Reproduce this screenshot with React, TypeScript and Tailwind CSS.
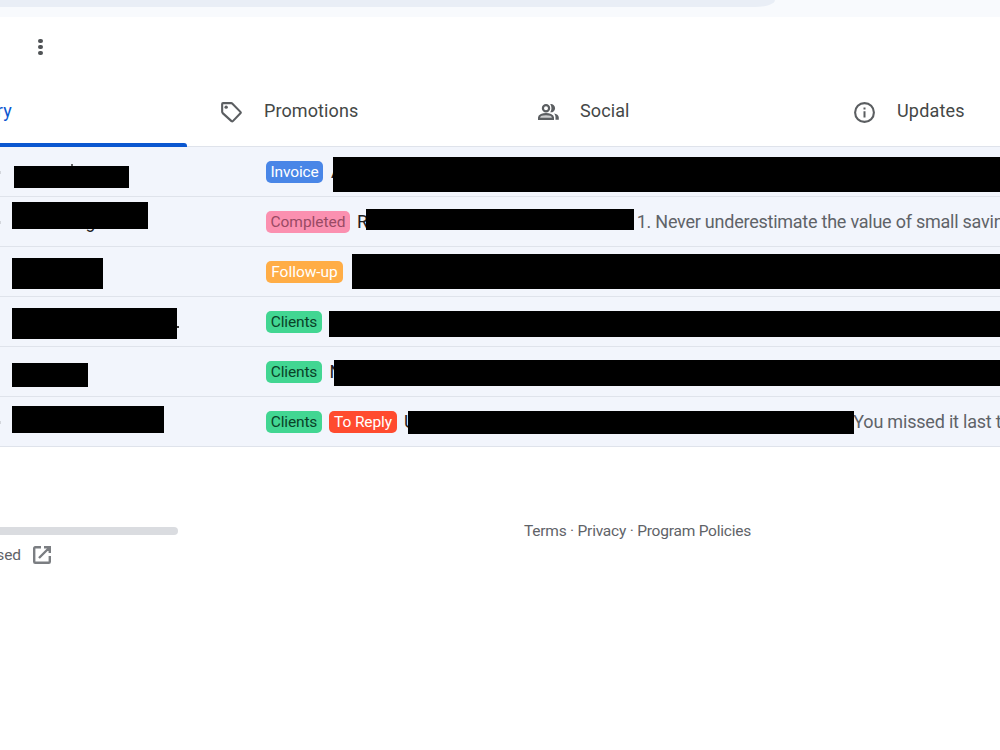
import type { ReactNode } from "react";
import clsx from "clsx";

type Label = { text: string; className: string };

type Mail = {
  id: string;
  star?: boolean;
  sender: ReactNode;
  labels: Label[];
  // first letter of the subject that stays visible next to the redaction
  initial?: string;
  initialClass: string;
  barClass: string;
  snippet?: string;
  snippetClass?: string;
};

const CLIENTS: Label = {
  text: "Clients",
  className: "w-14 bg-[#42d692] text-[#094228] tracking-[-0.15px]",
};

const MAILS: Mail[] = [
  {
    id: "invoice",
    star: true,
    sender: (
      <>
        <div className="ml-[1.5px] mt-[18.5px] h-[22.5px] w-[115px] bg-black" />
        <span className="absolute left-[71px] top-[17px] size-0.5 rounded-full bg-[#333]" />
      </>
    ),
    labels: [
      {
        text: "Invoice",
        className: "w-[57px] bg-[#4986e7] text-white tracking-[-0.15px]",
      },
    ],
    initial: "A",
    initialClass: "ml-[8px] w-[1.5px]",
    barClass: "mt-[10px] h-[34.5px] w-[668px]",
  },
  {
    id: "completed",
    star: true,
    sender: (
      <>
        <span className="absolute left-[85.5px] top-[13px] text-[17.5px] leading-6 text-[#202124]">
          g
        </span>
        <div className="relative mt-[5.400px] h-[26.5px] w-[136px] bg-black" />
      </>
    ),
    labels: [
      {
        text: "Completed",
        className: "w-[84px] bg-[#fb90b0] text-[#994a64] tracking-[-0.02px]",
      },
    ],
    initial: "R",
    initialClass: "ml-[7px] w-[9.3px]",
    barClass: "mt-[12px] h-[21.400px] w-[267.400px]",
    snippet: "1. Never underestimate the value of small savings",
    snippetClass: "ml-[3px] tracking-[-0.24px]",
  },
  {
    id: "follow-up",
    sender: <div className="mt-[10.5px] h-[31.5px] w-[91px] bg-black" />,
    labels: [
      {
        text: "Follow-up",
        className: "w-[77px] bg-[#ffad46] text-white tracking-[-0.02px]",
      },
    ],
    initialClass: "ml-[9px]",
    barClass: "mt-[7px] h-[35px] w-[648px]",
  },
  {
    id: "clients-1",
    sender: (
      <>
        <div className="mt-[11px] h-[31px] w-[165px] bg-black" />
        <span className="absolute left-[177px] top-[29px] h-0.5 w-[1.5px] bg-[#333]" />
      </>
    ),
    labels: [CLIENTS],
    initialClass: "ml-[7.3px]",
    barClass: "mt-[14px] h-[26px] w-[671px]",
  },
  {
    id: "clients-2",
    sender: <div className="mt-4 h-[24.400px] w-[76px] bg-black" />,
    labels: [CLIENTS],
    initial: "N",
    initialClass: "ml-[7.5px] w-[4.5px]",
    barClass: "mt-[12.5px] h-[26.5px] w-[666px]",
  },
  {
    id: "to-reply",
    star: true,
    sender: <div className="mt-[9.400px] h-[26.5px] w-[152.400px] bg-black" />,
    labels: [
      CLIENTS,
      {
        text: "To Reply",
        className:
          "ml-[7px] w-[68px] bg-[#ff4b2f] text-white tracking-[-0.1px]",
      },
    ],
    initial: "U",
    initialClass: "ml-[7px] w-[4.4px]",
    barClass: "mt-[14.400px] h-[23px] w-[445.400px]",
    snippet: "You missed it last time",
    snippetClass: "-ml-[0.5px] tracking-[-0.2px]",
  },
];

function TagIcon() {
  return (
    <svg viewBox="0 0 20 20" className="size-[21px]" fill="none" aria-hidden>
      <path
        d="M1.1 1.9a.8.8 0 0 1 .8-.8h7.8c.5 0 .9.2 1.2.5l7.6 7.8c.4.4.4.9 0 1.3l-7.2 7.5c-.4.4-.9.4-1.3 0L1.6 10.6c-.3-.3-.5-.7-.5-1.2Z"
        stroke="currentColor"
        strokeWidth="2"
        strokeLinejoin="round"
      />
      <circle cx="4.9" cy="4.9" r="1.6" fill="currentColor" />
    </svg>
  );
}

function PeopleIcon() {
  return (
    <svg viewBox="0 0 21 16" className="h-4 w-[21px]" fill="none" aria-hidden>
      <circle cx="8" cy="4.2" r="3.1" stroke="currentColor" strokeWidth="2.2" />
      <path
        d="M1.1 14.8v-1.4c0-2.2 3.7-3.3 6.9-3.3s6.9 1.1 6.9 3.3v1.4Z"
        stroke="currentColor"
        strokeWidth="2.2"
        fill="currentColor"
        fillOpacity="0.3"
      />
      <path
        d="M12.1 0.2a4.1 4.1 0 1 1 0 8c1.8-2 1.8-6 0-8ZM16 9.6c2.7.5 4.8 1.8 4.8 3.9v2.3h-3.3v-2.3c0-1.6-.5-2.8-1.5-3.9Z"
        fill="currentColor"
      />
    </svg>
  );
}

function InfoIcon() {
  return (
    <svg viewBox="0 0 21 21" className="size-[21px]" fill="none" aria-hidden>
      <circle cx="10.5" cy="10.5" r="9.4" stroke="currentColor" strokeWidth="2.1" />
      <path d="M10.5 9.3v6.2M10.5 5.5v2" stroke="currentColor" strokeWidth="2" />
    </svg>
  );
}

function OpenIcon() {
  return (
    <svg viewBox="0 0 18 18" className="size-[18px]" fill="none" aria-hidden>
      <path
        d="M8 1.2H2.200A1 1 0 0 0 1.200 2.200v13.600A1 1 0 0 0 2.200 16.800h13.600a1 1 0 0 0 1-1V10M11 1.200h5.800v5.800M16.500 1.500 6 12"
        stroke="currentColor"
        strokeWidth="2.4"
      />
    </svg>
  );
}

function Tab({
  icon,
  label,
  className,
  labelClass,
}: {
  icon: ReactNode;
  label: string;
  className: string;
  labelClass: string;
}) {
  return (
    <div className={clsx("flex items-center pb-0.5 text-[#5b5e61]", className)}>
      <span className="mt-[3px]">{icon}</span>
      <span
        className={clsx(
          "whitespace-nowrap text-[18px] font-[450] leading-6 text-[#444746]",
          labelClass,
        )}
      >
        {label}
      </span>
    </div>
  );
}

function MailRow({ mail }: { mail: Mail }) {
  return (
    <div className="flex h-[50px] border-t border-[#dfe3eb] bg-[#f2f5fc]">
      <div className="relative w-[266px] shrink-0 pl-3">
        {mail.star && (
          <span className="absolute left-0 top-[24px] h-[3px] w-px bg-[#d3d6dc]" />
        )}
        {mail.sender}
      </div>
      {mail.labels.map((label) => (
        <span
          key={label.text}
          className={clsx(
            "mt-[14px] flex h-[22px] shrink-0 items-center justify-center whitespace-nowrap rounded-[5px] text-[15.5px] leading-5",
            label.className,
          )}
        >
          {label.text}
        </span>
      ))}
      <span
        className={clsx(
          "mt-[13px] shrink-0 text-[18px] leading-6 text-[#202124]",
          mail.initialClass,
        )}
      >
        {mail.initial}
      </span>
      <div className={clsx("relative shrink-0 bg-black", mail.barClass)} />
      {mail.snippet && (
        <span
          className={clsx(
            "mt-[13px] shrink-0 whitespace-nowrap text-[18px] leading-6 text-[#5f6368]",
            mail.snippetClass,
          )}
        >
          {mail.snippet}
        </span>
      )}
    </div>
  );
}

export default function App() {
  return (
    <div className="h-[750px] w-full overflow-hidden bg-white font-['Roboto',sans-serif]">
      <header className="h-[17px] bg-[#f8fafd]">
        <div className="h-[7px] w-[775px] rounded-br-[20px_7px] bg-[#e9eef6]" />
      </header>

      <div className="flex h-[60px] items-center pl-[38px]">
        <div className="flex flex-col gap-[1.5px]">
          <span className="size-[4.5px] rounded-full bg-[#505356]" />
          <span className="size-[4.5px] rounded-full bg-[#505356]" />
          <span className="size-[4.5px] rounded-full bg-[#505356]" />
        </div>
      </div>

      <nav className="flex h-[69px]">
        <div className="relative flex w-[187px] shrink-0 items-center pb-0.5">
          <div className="flex w-3 justify-end">
            <span className="whitespace-nowrap text-[18px] font-[450] leading-6 tracking-[0.2px] text-[#0b57d0]">
              Primary
            </span>
          </div>
          <span className="absolute -bottom-px left-0 h-1 w-full rounded-tr-[3px] bg-[#0b57d0]" />
        </div>
        <Tab
          icon={<TagIcon />}
          label="Promotions"
          className="w-[317px] shrink-0 pl-[34px]"
          labelClass="ml-[22px] tracking-[0.1px]"
        />
        <Tab
          icon={<PeopleIcon />}
          label="Social"
          className="w-[316px] shrink-0 pl-[34px]"
          labelClass="ml-[21px] tracking-[0.1px]"
        />
        <Tab
          icon={<InfoIcon />}
          label="Updates"
          className="pl-[34px]"
          labelClass="ml-[22px] tracking-[0.2px]"
        />
      </nav>

      <main className="h-[301px] border-b border-[#dfe3eb]">
        {MAILS.map((mail) => (
          <MailRow key={mail.id} mail={mail} />
        ))}
      </main>

      <footer className="flex pt-[74px] text-[15.5px] leading-5 text-[#5f6368]">
        <div className="w-[524px] shrink-0 pt-[6px]">
          <div className="h-2 w-[178px] rounded-r-full bg-[#dadce0]" />
          <div className="mt-[10px] flex items-center">
            <div className="flex w-[21px] justify-end">
              <span className="tracking-[-0.1px]">used</span>
            </div>
            <span className="ml-3 text-[#7b7e82]">
              <OpenIcon />
            </span>
          </div>
        </div>
        <div className="whitespace-nowrap tracking-[-0.22px]">
          Terms · Privacy · Program Policies
        </div>
      </footer>
    </div>
  );
}
